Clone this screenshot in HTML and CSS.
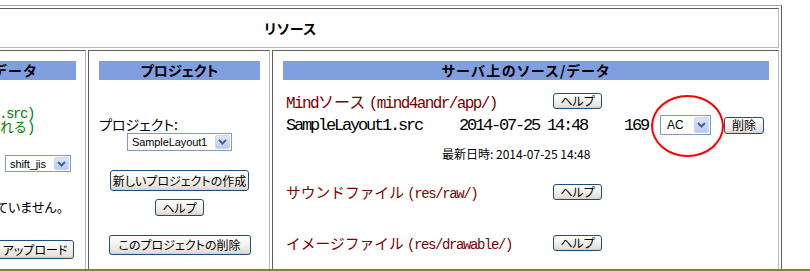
FILE: index.html
```html
<!DOCTYPE html>
<html lang="ja">
<head>
<meta charset="utf-8">
<title>リソース</title>
<link rel="stylesheet" href="styles.css">
</head>
<body>
<div class="frame">
  <div class="outer">
    <div class="cell title">リソース</div>

    <div class="cell col">
      <div class="bar bar-left">ローカル上のソース/データ</div>
      <div class="lbody">
        <div class="green">
          <div class="gline"><span class="lat">(</span>ファイル名は<span class="lat"> *.src)</span></div>
          <div class="gline"><span class="lat">(</span>この文字コードが使われる<span class="lat">)</span></div>
        </div>
        <div class="lsel-row">
          <span class="ltext">文字コード:</span>
          <div class="sel sel-enc"><span class="seltext">shift_jis</span><span class="arrow"><svg width="9" height="6" viewBox="0 0 9 6"><path d="M1 1 L4.5 4.5 L8 1" fill="none" stroke="#4d6185" stroke-width="2"/></svg></span></div>
        </div>
        <div class="nofile">ファイルが選択されていません。</div>
        <div class="btn upload">アップロード</div>
      </div>
    </div>

    <div class="cell col">
      <div class="bar bar-mid">プロジェクト</div>
      <div class="mbody">
        <div class="plabel">プロジェクト:</div>
        <div class="sel sel-proj"><span class="seltext">SampleLayout1</span><span class="arrow"><svg width="9" height="6" viewBox="0 0 9 6"><path d="M1 1 L4.5 4.5 L8 1" fill="none" stroke="#4d6185" stroke-width="2"/></svg></span></div>
        <div class="btn btn-new">新しいプロジェクトの作成</div>
        <div class="btn help-mid">ヘルプ</div>
        <div class="btn btn-delproj">このプロジェクトの削除</div>
      </div>
    </div>

    <div class="cell col right">
      <div class="bar bar-right">サーバ上のソース/データ</div>
      <div class="rrow r1">
        <div class="label red red16"><span class="lat16">Mind</span>ソース <span class="lat16">(mind4andr/app/)</span></div>
        <div class="btn help">ヘルプ</div>
      </div>
      <div class="rrow r2">
        <div class="fname mono">SampleLayout1.src</div>
        <div class="fdate mono">2014-07-25 14:48</div>
        <div class="fsize mono">169</div>
        <div class="sel sel-ac"><span class="seltext">AC</span><span class="arrow"><svg width="9" height="6" viewBox="0 0 9 6"><path d="M1 1 L4.5 4.5 L8 1" fill="none" stroke="#4d6185" stroke-width="2"/></svg></span></div>
        <div class="btn del">削除</div>
      </div>
      <div class="rrow r3">
        <div class="upd">最新日時: 2014-07-25 14:48</div>
      </div>
      <div class="rrow r4">
        <div class="label red">サウンドファイル <span class="lat">(res/raw/)</span></div>
        <div class="btn help">ヘルプ</div>
      </div>
      <div class="rrow r5">
        <div class="label red">イメージファイル <span class="lat">(res/drawable/)</span></div>
        <div class="btn help">ヘルプ</div>
      </div>
      <div class="circle"></div>
    </div>
  </div>
</div>
<div class="bottombar"></div>
</body>
</html>
```

FILE: styles.css
```css
html, body {
  margin: 0;
  padding: 0;
  background: #fff;
}
body {
  width: 810px;
  height: 271px;
  overflow: hidden;
  font-family: "Noto Sans CJK JP", sans-serif;
  color: #000;
}
.frame {
  height: 269px;
  overflow: hidden;
  padding-top: 5px;
  box-sizing: border-box;
}
.bottombar {
  height: 2px;
  background: #808040;
}
.outer {
  margin-left: -201px;
  width: 983px;
  box-sizing: border-box;
  border: 1px solid;
  border-color: #a8a8a8 #606060 #606060 #a8a8a8;
  padding: 2px;
  display: grid;
  grid-template-columns: 284px 182px 507px;
  gap: 2px;
}
.cell {
  box-sizing: border-box;
  border: 1px solid;
  border-color: #606060 #b8b8b8 #b8b8b8 #606060;
}
.title {
  grid-column: 1 / -1;
  height: 40px;
  display: flex;
  align-items: center;
  justify-content: center;
  font-weight: bold;
  font-size: 14px;
  font-feature-settings: "palt";
  letter-spacing: 0.5px;
}
.col {
  height: 300px;
  padding: 10px 9px 0 10px;
  position: relative;
}
.bar {
  height: 19px;
  line-height: 19px;
  background: #809fdf;
  text-align: center;
  font-weight: bold;
  font-size: 14px;
  font-feature-settings: "palt";
  letter-spacing: 1px;
  white-space: nowrap;
}
.bar-mid { letter-spacing: 0; }
.bar-right { letter-spacing: 1.4px; }
.bar-left { letter-spacing: 1.6px; }

/* buttons (XP look) */
.btn {
  box-sizing: border-box;
  border: 1px solid #1d4f7e;
  border-radius: 3px;
  background: linear-gradient(#ffffff, #f4f3ee 40%, #e6e3da 85%, #d4cfc3);
  display: flex;
  align-items: center;
  justify-content: center;
  font-size: 12px;
  line-height: 1;
  font-feature-settings: "palt";
  color: #000;
  white-space: nowrap;
}

/* select look */
.sel {
  box-sizing: border-box;
  border: 1px solid #7f9db9;
  background: #fff;
  display: flex;
  align-items: stretch;
  justify-content: space-between;
}
.seltext {
  font-family: "Liberation Sans", sans-serif;
  font-size: 11px;
  display: flex;
  align-items: center;
  padding-left: 4px;
  letter-spacing: -0.1px;
}
.arrow {
  width: 15px;
  margin: 1px;
  border-radius: 2px;
  background: linear-gradient(#dce6fd, #b7cbf8);
  border: 1px solid #c4d4fb;
  box-sizing: border-box;
  display: flex;
  align-items: center;
  justify-content: center;
}

/* left column */
.lbody {
  display: flex;
  flex-direction: column;
  align-items: flex-end;
}
.green {
  margin-top: 25px;
  margin-right: 42px;
  text-align: right;
  color: #008000;
  font-size: 13.5px;
}
.gline {
  height: 14px;
  line-height: 14px;
  white-space: nowrap;
}
.lsel-row {
  margin-top: 22px;
  margin-right: 5px;
  height: 17px;
  display: flex;
  align-items: center;
  gap: 6px;
}
.ltext {
  font-size: 13px;
  line-height: 17px;
}
.sel-enc {
  width: 66px;
  height: 17px;
}
.nofile {
  margin-top: 27px;
  margin-right: 13px;
  height: 16px;
  font-size: 13px;
  line-height: 16px;
  font-feature-settings: "palt";
  white-space: nowrap;
}
.upload {
  margin-top: 25px;
  margin-right: 2px;
  width: 78px;
  height: 19px;
}

/* middle column */
.mbody {
  display: flex;
  flex-direction: column;
  align-items: center;
}
.plabel {
  align-self: flex-start;
  margin-top: 35px;
  height: 18px;
  line-height: 18px;
  font-size: 14px;
  letter-spacing: 0;
  font-feature-settings: "palt";
}
.sel-proj {
  width: 105px;
  height: 18px;
}
.btn-new {
  margin-top: 19px;
  width: 139px;
  height: 21px;
}
.help-mid {
  margin-top: 8px;
  width: 49px;
  height: 17px;
}
.btn-delproj {
  margin-top: 19px;
  width: 142px;
  height: 20px;
}

/* right column */
.rrow {
  display: flex;
  align-items: center;
  height: 25px;
}
.r1 { margin-top: 8px; }
.r2 { height: 24px; }
.r3 { height: 32px; }
.r4 { margin-top: 10px; }
.r5 { margin-top: 26px; }
.label {
  width: 270px;
  padding-left: 3px;
  box-sizing: border-box;
  white-space: nowrap;
}
.red {
  color: #800000;
  font-size: 14.75px;
}
.red16 { font-size: 16px; }
.lat {
  font-family: "Liberation Mono", monospace;
  font-size: 14px;
  letter-spacing: -1.4px;
}
.lat16 {
  font-family: "Liberation Mono", monospace;
  font-size: 16px;
  letter-spacing: -1.6px;
}
.help {
  width: 49px;
  height: 16px;
}
.mono {
  font-family: "Liberation Mono", monospace;
  font-size: 17px;
  letter-spacing: -2.2px;
  white-space: nowrap;
}
.fname {
  width: 176px;
  padding-left: 3px;
  box-sizing: border-box;
}
.fdate { width: 128px; }
.fsize {
  width: 61px;
  text-align: right;
}
.sel-ac {
  margin-left: 12px;
  width: 51px;
  height: 20px;
}
.sel-ac .seltext { font-size: 12px; padding-left: 6px; }
.del {
  margin-left: 13px;
  width: 40px;
  height: 17px;
}
.upd {
  padding-left: 159px;
  font-size: 12px;
}
.circle {
  position: absolute;
  left: 378px;
  top: 44px;
  width: 73px;
  height: 62px;
  box-sizing: border-box;
  border: 2px solid #f00;
  border-radius: 50%;
}
```
